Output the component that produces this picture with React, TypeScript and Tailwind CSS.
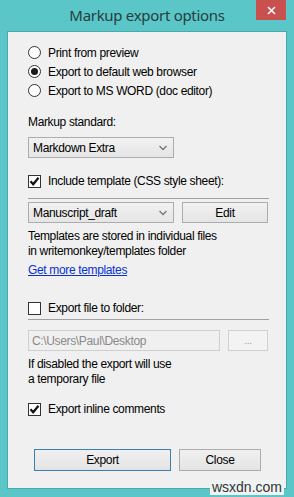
import React from "react";

const font = { fontFamily: '"Liberation Sans", Arial, sans-serif', letterSpacing: "-0.35px" };

function Radio({ checked, label }: { checked?: boolean; label: string }) {
  return (
    <div className="flex h-[19px] items-center">
      <div className="flex h-[13px] w-[13px] items-center justify-center rounded-full border border-[#333] bg-white">
        {checked && <div className="h-[7px] w-[7px] rounded-full bg-[#1a1a1a]" />}
      </div>
      <span className="ml-[7px] text-[12px] text-black">{label}</span>
    </div>
  );
}

function Check({ checked, label }: { checked?: boolean; label: string }) {
  return (
    <div className="flex h-[20px] items-center">
      <div className="flex h-[13px] w-[13px] items-center justify-center border border-[#333] bg-white">
        {checked && (
          <svg width="11" height="11" viewBox="0 0 11 11">
            <path d="M1.5 5.3 L4.2 8.3 L9.5 1.8" fill="none" stroke="#111" strokeWidth="2.2" />
          </svg>
        )}
      </div>
      <span className="ml-[7px] text-[12px] text-black">{label}</span>
    </div>
  );
}

function Select({ value }: { value: string }) {
  return (
    <div className="flex h-[21px] w-[146px] items-center justify-between border border-[#acacac] bg-gradient-to-b from-[#f2f2f2] to-[#e5e5e5] pl-[4px] pr-[6px]">
      <span className="text-[12px] text-black">{value}</span>
      <svg width="8" height="6" viewBox="0 0 8 6">
        <path d="M0.5 1 L4 4.5 L7.5 1" fill="none" stroke="#777" strokeWidth="1.3" />
      </svg>
    </div>
  );
}

export default function App() {
  return (
    <div style={font} className="relative flex h-[497px] w-[294px] flex-col bg-[#5bc6c8]">
      <div className="relative flex h-[31px] items-center justify-center">
        <span className="text-[15px] text-[#263d3e]" style={{ fontFamily: '"Noto Sans", sans-serif', letterSpacing: "-0.3px" }}>
          Markup export options
        </span>
        <div className="absolute right-[8px] top-0 flex h-[20px] w-[30px] items-center justify-center bg-[#c8504f]">
          <svg width="9" height="9" viewBox="0 0 9 9">
            <path d="M1 1 L8 8 M8 1 L1 8" stroke="#fff" strokeWidth="1.6" />
          </svg>
        </div>
      </div>
      <div className="mx-[7px] h-[458px] border border-[#4aa9ab] bg-[#f0f0f0] pl-[20px] pr-[17px] pt-[11px]">
        <Radio label="Print from preview" />
        <Radio checked label="Export to default web browser" />
        <Radio label="Export to MS WORD (doc editor)" />
        <div className="mt-[14px] flex h-[16px] items-center text-[12px]">Markup standard:</div>
        <div className="mt-[7px]">
          <Select value="Markdown Extra" />
        </div>
        <div className="mt-[13px]">
          <Check checked label="Include template (CSS style sheet):" />
        </div>
        <div className="mt-[7px] h-px w-[241px] bg-[#a0a0a0]" />
        <div className="mt-[3px] flex gap-[8px]">
          <Select value="Manuscript_draft" />
          <div className="flex h-[21px] w-[86px] items-center justify-center border border-[#acacac] bg-gradient-to-b from-[#f2f2f2] to-[#e5e5e5] text-[12px]">
            Edit
          </div>
        </div>
        <div className="mt-[6px] text-[12px] leading-[15px]">
          <div>Templates are stored in individual files</div>
          <div>in writemonkey/templates folder</div>
        </div>
        <div className="mt-[3px] flex h-[16px] items-center text-[12px] text-[#0a2fd6] underline">Get more templates</div>
        <div className="mt-[20px]">
          <Check label="Export file to folder:" />
        </div>
        <div className="mt-[1px] h-px w-[241px] bg-[#a0a0a0]" />
        <div className="mt-[10px] flex gap-[8px]">
          <div className="flex h-[21px] w-[192px] items-center border border-[#cfcfcf] bg-[#f0f0f0] pl-[3px] text-[12px] text-[#8a8a8a]">
            C:\Users\Paul\Desktop
          </div>
          <div className="flex h-[21px] w-[40px] items-center justify-center border border-[#d0d0d0] bg-[#f3f3f3] text-[10px] text-[#a0a0a0]">
            ...
          </div>
        </div>
        <div className="mt-[6px] text-[12px] leading-[15px]">
          <div>If disabled the export will use</div>
          <div>a temporary file</div>
        </div>
        <div className="mt-[12px]">
          <Check checked label="Export inline comments" />
        </div>
        <div className="ml-[6px] mt-[30px] flex gap-[8px]">
          <div className="flex h-[22px] w-[137px] items-center justify-center border border-[#3c7fb1] bg-gradient-to-b from-[#f0f0f0] to-[#e4e4e4] text-[12px]">
            Export
          </div>
          <div className="flex h-[22px] w-[82px] items-center justify-center border border-[#acacac] bg-gradient-to-b from-[#f0f0f0] to-[#e4e4e4] text-[12px]">
            Close
          </div>
        </div>
      </div>
      <div className="absolute bottom-[2px] right-[10px] bg-[#eef3f3] px-[2px] text-[14px] leading-[15px] text-[#333]" style={{ letterSpacing: "0" }}>
        wsxdn.com
      </div>
    </div>
  );
}
